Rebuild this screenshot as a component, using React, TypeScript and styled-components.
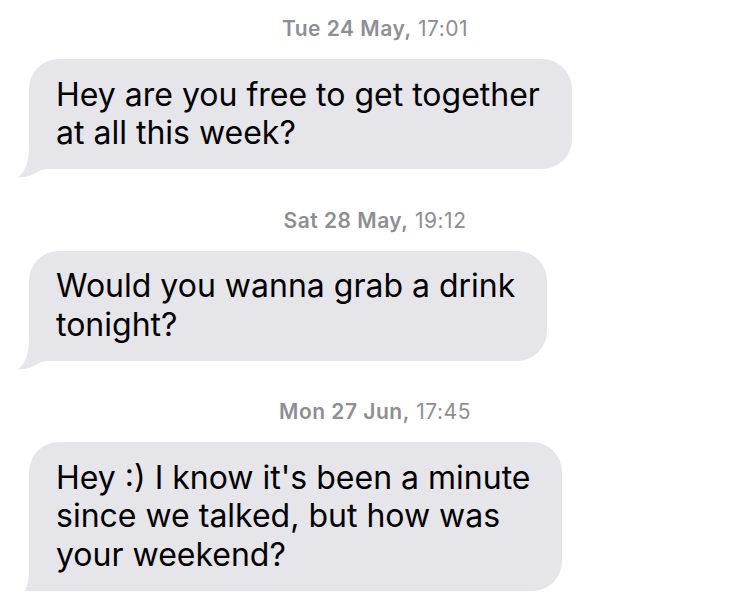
import React from "react";
import styled, { createGlobalStyle } from "styled-components";

const Global = createGlobalStyle`
  html, body { margin: 0; padding: 0; background: #ffffff; }
  body {
    font-family: Inter, "Liberation Sans", Arial, sans-serif;
    -webkit-font-smoothing: antialiased;
  }
`;

const Thread = styled.div`
  display: flex;
  flex-direction: column;
  width: 750px;
  padding-top: 17px;
`;

const Stamp = styled.div<{ $first?: boolean }>`
  margin-top: ${(p) => (p.$first ? 0 : 39.5)}px;
  margin-bottom: 18px;
  text-align: center;
  font-size: 21px;
  line-height: 24px;
  color: #8e8e93;
  letter-spacing: 0.5px;
`;

const Day = styled.span`
  font-weight: 600;
`;

const Row = styled.div`
  display: flex;
  padding-left: 29px;
`;

const Bubble = styled.div`
  position: relative;
  background: #e5e5ea;
  border-radius: 30px;
  padding: 16.5px 32px 16.5px 27px;
  font-size: 32px;
  line-height: 38.5px;
  color: #000000;
  white-space: pre-line;
`;

const Text = styled.span`
  position: relative;
  z-index: 1;
`;

const Tail = styled.svg`
  position: absolute;
  left: -12px;
  bottom: -10px;
  width: 50px;
  height: 40px;
  z-index: 0;
`;

type Message = { day: string; time: string; text: string };

const messages: Message[] = [
  {
    day: "Tue 24 May,",
    time: "17:01",
    text: "Hey are you free to get together\nat all this week?",
  },
  {
    day: "Sat 28 May,",
    time: "19:12",
    text: "Would you wanna grab a drink\ntonight?",
  },
  {
    day: "Mon 27 Jun,",
    time: "17:45",
    text: "Hey :) I know it's been a minute\nsince we talked, but how was\nyour weekend?",
  },
];

export default function App() {
  return (
    <>
      <Global />
      <Thread>
        {messages.map((m, i) => (
          <React.Fragment key={i}>
            <Stamp $first={i === 0}>
              <Day>{m.day}</Day> {m.time}
            </Stamp>
            <Row>
              <Bubble>
                <Tail viewBox="0 0 50 40" aria-hidden="true">
                  <path
                    d="M12 0 L12 8 C12 24 8 33 1 38 C8 39 16 36 22 32 C25 30.5 28 30 32 30 L50 30 L50 0 Z"
                    fill="#e5e5ea"
                  />
                </Tail>
                <Text>{m.text}</Text>
              </Bubble>
            </Row>
          </React.Fragment>
        ))}
      </Thread>
    </>
  );
}
